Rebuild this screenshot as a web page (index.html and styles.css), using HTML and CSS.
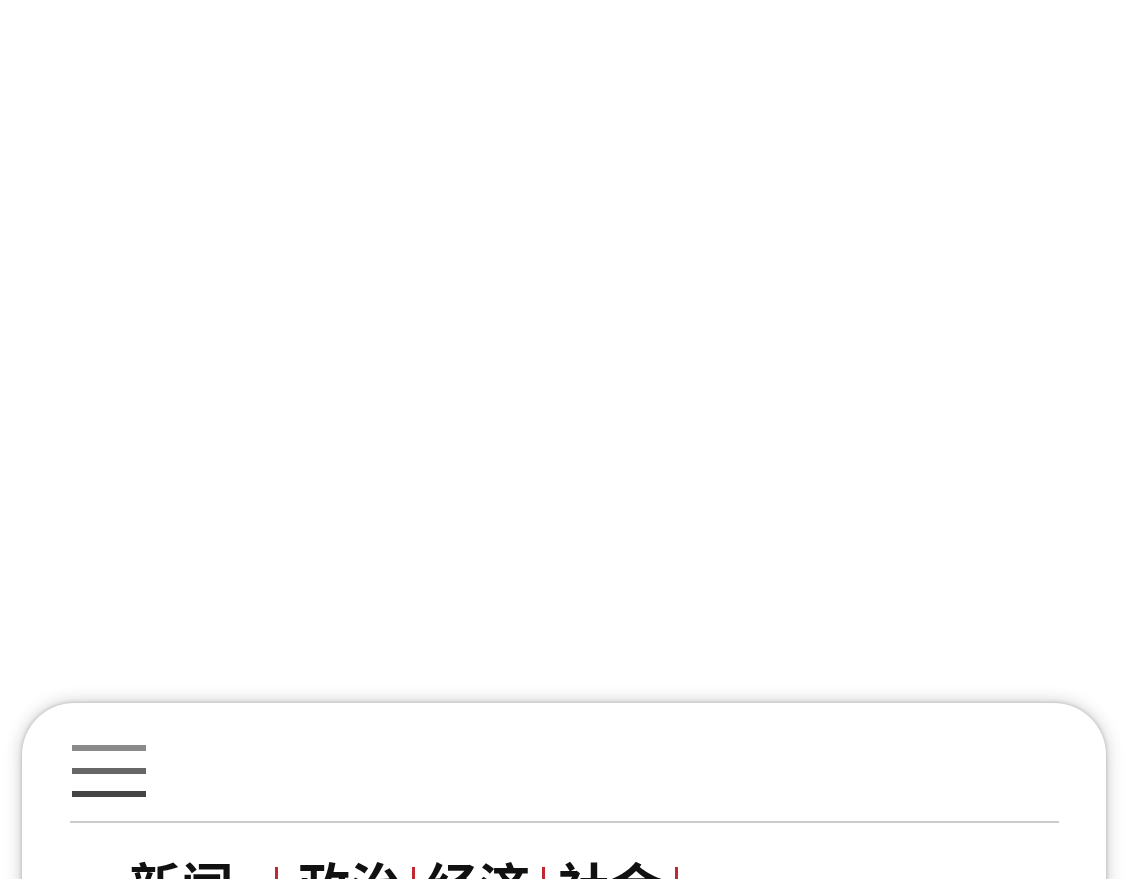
FILE: index.html
```html
<!DOCTYPE html>
<html lang="zh">
<head>
<meta charset="utf-8">
<title>新闻</title>
<link rel="stylesheet" href="styles.css">
</head>
<body>
<div class="page">
  <div class="card">
    <div class="menu" aria-label="menu">
      <span class="bar b1"></span>
      <span class="bar b2"></span>
      <span class="bar b3"></span>
    </div>
    <div class="divider"></div>
    <nav class="tabs">
      <span class="tab first">新闻</span>
      <span class="sep s1"></span>
      <span class="tab">政治</span>
      <span class="sep s2"></span>
      <span class="tab">经济</span>
      <span class="sep s3"></span>
      <span class="tab">社会</span>
      <span class="sep s4"></span>
    </nav>
  </div>
</div>
</body>
</html>
```
FILE: styles.css
```css
html, body {
  margin: 0;
  padding: 0;
  background: #fff;
  overflow: hidden;
  height: 100%;
}
.page {
  padding: 703px 19px 0 22px;
}
.card {
  height: 400px;
  background: #fff;
  border-radius: 52px;
  box-shadow: 0 0 4px rgba(0,0,0,0.22), 0 0 18px rgba(0,0,0,0.22);
  padding: 42px 47px 0 48px;
  box-sizing: border-box;
}
.menu {
  display: flex;
  flex-direction: column;
  gap: 17px;
  padding-left: 2px;
}
.bar {
  display: block;
  width: 74px;
  height: 6px;
}
.b1 { background: #8a8a8a; }
.b2 { background: #666; }
.b3 { background: #444; }
.divider {
  margin-top: 24px;
  height: 2px;
  background: #cbcbcb;
}
.tabs {
  display: flex;
  align-items: flex-start;
  padding-left: 59px;
  margin-top: 36px;
  font-family: "Noto Sans CJK SC", "Noto Sans", sans-serif;
  font-weight: 700;
  font-size: 52px;
  line-height: 52px;
  color: #111;
}
.tab {
  display: block;
}
.sep {
  display: block;
  width: 3px;
  height: 40px;
  margin-top: 8px;
  background: #c0282f;
}
.s1 { margin-left: 42px; margin-right: 20px; }
.s2 { margin-left: 10px; margin-right: 11px; }
.s3 { margin-left: 12px; margin-right: 13px; }
.s4 { margin-left: 13px; }
```
